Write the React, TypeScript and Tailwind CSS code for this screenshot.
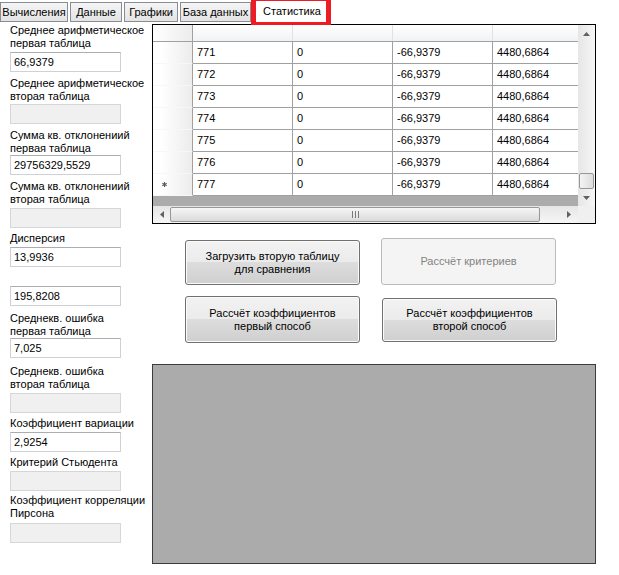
import React from "react"

const rows = [771, 772, 773, 774, 775, 776, 777]

const tabs = [
    { label: "Вычисления", w: "w-[68px]" },
    { label: "Данные", w: "w-[52px]" },
    { label: "Графики", w: "w-[54px]" },
    { label: "База данных", w: "w-[71px]" },
]

function Field({ value, disabled, className = "" }: { value?: string; disabled?: boolean; className?: string }) {
    return (
        <div
            className={`w-[111px] h-[20px] flex items-center pl-[3px] border ${
                disabled
                    ? "bg-[#f0f0f0] border-[#d6d6d6]"
                    : "bg-white border-[#cfd1d7] border-t-[#abadb3]"
            } ${className}`}
        >
            {value}
        </div>
    )
}

function Label({ lines, className = "" }: { lines: string[]; className?: string }) {
    return (
        <div className={`leading-[13px] whitespace-nowrap ${className}`}>
            {lines.map((l) => (
                <div key={l}>{l}</div>
            ))}
        </div>
    )
}

function WinButton({ lines, disabled, className = "" }: { lines: string[]; disabled?: boolean; className?: string }) {
    return (
        <div
            className={`w-[175px] flex flex-col items-center justify-center rounded-[3px] border leading-[13px] ${
                disabled
                    ? "bg-[#f4f4f4] border-[#b9bcbf] text-[#838383]"
                    : "border-[#707070] bg-[linear-gradient(to_bottom,#f2f2f2_0%,#ebebeb_50%,#dddddd_50%,#cfcfcf_100%)] shadow-[inset_0_0_0_1px_#fbfbfb]"
            } ${className}`}
        >
            {lines.map((l) => (
                <div key={l}>{l}</div>
            ))}
        </div>
    )
}

function Arrow({ dir }: { dir: "up" | "down" | "left" | "right" }) {
    const pts = {
        up: "0,4 7,4 3.5,0",
        down: "0,0 7,0 3.5,4",
        left: "4,0 4,7 0,3.5",
        right: "0,0 0,7 4,3.5",
    }[dir]
    const vertical = dir === "up" || dir === "down"
    return (
        <svg width={vertical ? 7 : 4} height={vertical ? 4 : 7} viewBox={vertical ? "0 0 7 4" : "0 0 4 7"}>
            <polygon points={pts} fill="#606060" />
        </svg>
    )
}

function DataGrid() {
    return (
        <div className="w-[444px] h-[200px] border border-black flex flex-col bg-white">
            <div className="flex h-[181px]">
                {/* cells */}
                <div className="w-[425px] overflow-hidden bg-[#ababab] flex flex-col">
                    <div className="flex h-[17px] shrink-0 bg-[linear-gradient(to_bottom,#ffffff,#f1f2f4)] border-b border-[#a0a0a0]">
                        <div className="w-[40px] shrink-0 border-r border-[#a0a0a0] bg-[linear-gradient(to_right,#ffffff,#ececec)]" />
                        {[0, 1, 2, 3].map((i) => (
                            <div key={i} className="w-[100px] shrink-0 border-r border-[#e1e2e5]" />
                        ))}
                    </div>
                    {rows.map((r) => (
                        <div key={r} className="flex h-[22px] shrink-0 bg-white">
                            <div className="w-[40px] shrink-0 border-r border-b border-r-[#a0a0a0] border-b-[#f7f7f7] bg-[linear-gradient(to_right,#ffffff_20%,#ececec)] flex items-center pl-[9px]">
                                {r === 777 && (
                                    <svg width="5" height="5" viewBox="0 0 5 5">
                                        <g stroke="#5a5a5a" strokeWidth="1.1">
                                            <line x1="2.5" y1="0" x2="2.5" y2="5" />
                                            <line x1="0.3" y1="1.3" x2="4.7" y2="3.7" />
                                            <line x1="0.3" y1="3.7" x2="4.7" y2="1.3" />
                                        </g>
                                    </svg>
                                )}
                            </div>
                            {[String(r), "0", "-66,9379", "4480,6864"].map((v, i) => (
                                <div
                                    key={i}
                                    className="w-[100px] shrink-0 border-r border-b border-[#a0a0a0] flex items-center pl-[4px]"
                                >
                                    {v}
                                </div>
                            ))}
                        </div>
                    ))}
                </div>
                {/* vertical scrollbar */}
                <div className="w-[17px] flex flex-col bg-[linear-gradient(to_right,#e6e6e6,#f6f6f6)]">
                    <div className="h-[17px] flex items-center justify-center pt-[1px]">
                        <Arrow dir="up" />
                    </div>
                    <div className="flex-1 flex flex-col justify-end">
                        <div className="h-[16px] mx-[1px] rounded-[2px] border border-[#979797] bg-[linear-gradient(to_right,#f4f4f4,#dcdcdc)]" />
                    </div>
                    <div className="h-[17px] flex items-center justify-center">
                        <Arrow dir="down" />
                    </div>
                </div>
            </div>
            <div className="flex h-[17px]">
                {/* horizontal scrollbar */}
                <div className="w-[425px] flex items-center bg-[linear-gradient(to_bottom,#e6e6e6,#f6f6f6)]">
                    <div className="w-[17px] h-full flex items-center justify-center">
                        <Arrow dir="left" />
                    </div>
                    <div className="w-[370px] h-[15px] rounded-[2px] border border-[#979797] bg-[linear-gradient(to_bottom,#f6f6f6,#dadada)] flex items-center justify-center gap-[2px]">
                        {[0, 1, 2].map((i) => (
                            <div key={i} className="w-[1px] h-[7px] bg-[#7a7a7a]" />
                        ))}
                    </div>
                    <div className="flex-1 h-full flex items-center justify-end pr-[7px]">
                        <Arrow dir="right" />
                    </div>
                </div>
                <div className="w-[17px] bg-[#f0f0f0]" />
            </div>
        </div>
    )
}

export default function App() {
    return (
        <div className="w-[619px] h-[575px] bg-white relative overflow-hidden font-['Liberation_Sans',Arial,sans-serif] text-[11px] text-black">
            {/* Tab strip */}
            <div className="relative h-[24px] flex items-start pt-[2px] gap-[2px]">
                {tabs.map((t) => (
                    <div
                        key={t.label}
                        className={`${t.w} h-[20px] flex items-center justify-center border border-[#898c95] bg-[linear-gradient(to_bottom,#f5f5f5,#e3e3e3)] whitespace-nowrap`}
                    >
                        {t.label}
                    </div>
                ))}
                <div className="w-[78px] h-[23px] -mt-[2px] flex items-center justify-center bg-white whitespace-nowrap">
                    Статистика
                </div>
                {/* red highlight */}
                <div className="absolute left-[251px] -top-[3px] w-[80px] h-[28px] border-x-[5px] border-t-[4px] border-b-[3px] border-[#ed1c24]" />
            </div>

            <div className="flex">
                {/* Left column */}
                <div className="w-[152px] shrink-0 pl-[10px] flex flex-col">
                    <Label lines={["Среднее арифметическое", "первая таблица"]} />
                    <Field value="66,9379" className="mt-[2px]" />
                    <Label lines={["Среднее арифметическое", "вторая таблица"]} className="mt-[5px]" />
                    <Field disabled className="mt-[1px]" />
                    <Label lines={["Сумма кв. отклонениий", "первая таблица"]} className="mt-[5px]" />
                    <Field value="29756329,5529" />
                    <Label lines={["Сумма кв. отклонениий", "вторая таблица"]} className="mt-[5px]" />
                    <Field disabled className="mt-[2px]" />
                    <Label lines={["Дисперсия"]} className="mt-[4px]" />
                    <Field value="13,9936" className="mt-[2px]" />
                    <Field value="195,8208" className="mt-[19px]" />
                    <Label lines={["Среднекв. ошибка", "первая таблица"]} className="mt-[6px]" />
                    <Field value="7,025" />
                    <Label lines={["Среднекв. ошибка", "вторая таблица"]} className="mt-[7px]" />
                    <Field disabled className="mt-[2px]" />
                    <Label lines={["Коэффициент вариации"]} className="mt-[4px]" />
                    <Field value="2,9254" className="mt-[2px]" />
                    <Label lines={["Критерий Стьюдента"]} className="mt-[4px]" />
                    <Field disabled className="mt-[2px]" />
                    <Label lines={["Коэффициент корреляции", "Пирсона"]} className="mt-[3px]" />
                    <Field disabled className="mt-[3px]" />
                </div>

                {/* Right column */}
                <div className="flex flex-col">
                    <DataGrid />
                    <div className="flex items-start gap-[21px] ml-[33px] mt-[14px]">
                        <WinButton lines={["Загрузить вторую таблицу", "для сравнения"]} className="h-[45px] mt-[2px]" />
                        <WinButton lines={["Рассчёт критериев"]} disabled className="h-[47px]" />
                    </div>
                    <div className="flex items-start gap-[22px] ml-[33px] mt-[11px]">
                        <WinButton lines={["Рассчёт коэффициентов", "первый способ"]} className="h-[47px]" />
                        <WinButton lines={["Рассчёт коэффициентов", "второй способ"]} className="h-[44px] w-[174px] mt-[2px]" />
                    </div>
                    <div className="w-[444px] h-[200px] mt-[21px] border border-[#3c3c3c] bg-[#ababab]" />
                </div>
            </div>
        </div>
    )
}
